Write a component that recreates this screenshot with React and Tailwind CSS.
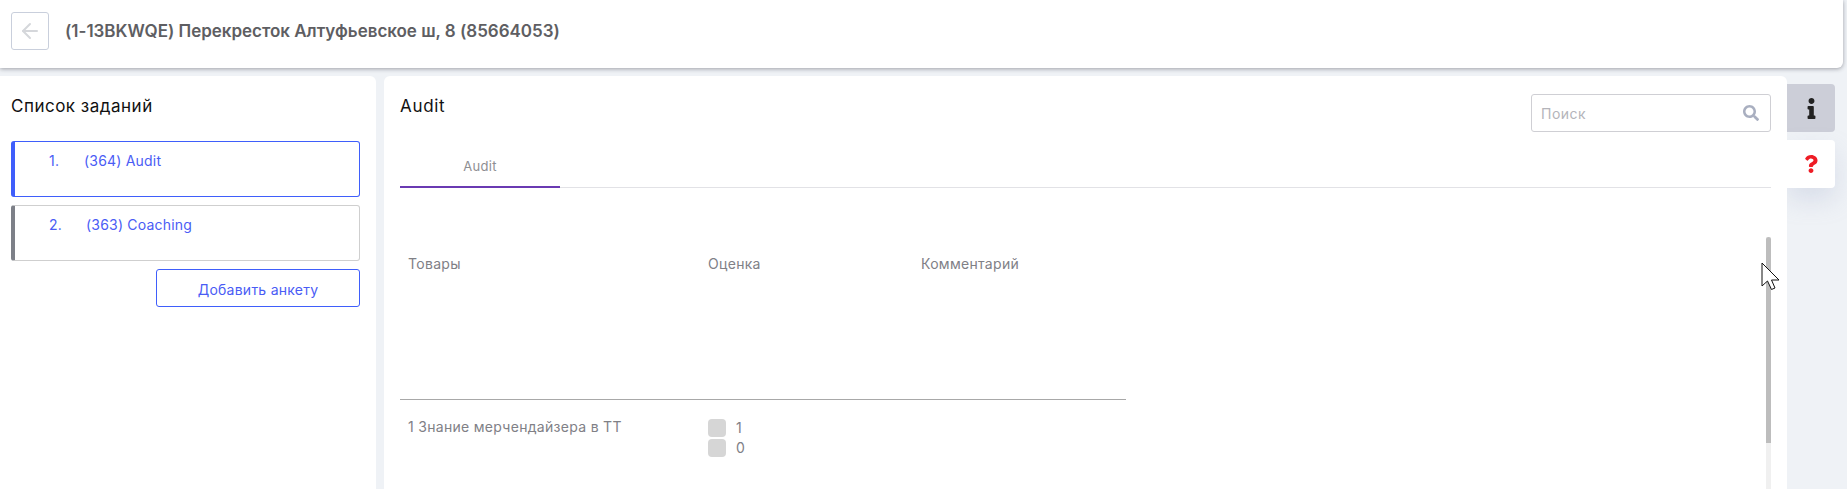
import React from 'react';
import { ArrowLeft } from 'lucide-react';
import { FaInfo, FaQuestion, FaSearch } from 'react-icons/fa';

const font = { fontFamily: 'Inter, "Noto Sans", sans-serif' };

function TaskCard({ num, label, active, labelGap }) {
  return (
    <div className={`h-[56px] rounded-[3px] border border-l-4 bg-white flex pt-[10px] pl-[34px] text-[14px] leading-[18px] tracking-[0.2px] text-[#4a5cf5] ${active ? 'border-[#3f5efb]' : 'border-[#cfcfcf] border-l-[#7d8088]'}`}>
      <span className={labelGap}>{num}</span>
      <span>{label}</span>
    </div>
  );
}

export default function App() {
  return (
    <div className="w-[1847px] h-[489px] overflow-hidden bg-[#eff2f6]" style={font}>
      <header className="w-[1843px] h-[68px] bg-white rounded-br-[6px] shadow-[0_1px_4px_rgba(60,60,70,0.45)] flex items-start pt-[12px] pl-[11px] relative z-10">
        <button className="w-[38px] h-[38px] rounded-[3px] border border-[#c9cfdc] flex items-center justify-center text-[#d5d7db]">
          <ArrowLeft className="w-[24px] h-[24px]" strokeWidth={2} />
        </button>
        <h1 className="ml-[16px] text-[17px] leading-[38px] font-semibold text-[#5e5e62] tracking-[-0.02px]">(1-13BKWQE) Перекресток Алтуфьевское ш, 8 (85664053)</h1>
      </header>

      <div className="flex pt-2 gap-2">
        <aside className="w-[376px] h-[413px] bg-white rounded-tr-[6px] pl-[11px] pr-[16px]">
          <h2 className="pt-[20px] text-[17px] leading-[20px] tracking-[0.5px] text-[#111]">Список заданий</h2>
          <div className="mt-[25px] flex flex-col gap-2">
            <TaskCard num="1." label="(364) Audit" active labelGap="w-[35px]" />
            <TaskCard num="2." label="(363) Coaching" labelGap="w-[37px]" />
          </div>
          <div className="flex justify-end mt-2">
            <button className="w-[204px] h-[38px] rounded-[3px] border border-[#3f5efb] bg-white pt-[3px] text-[14px] tracking-[0.25px] text-[#4a5cf5]">Добавить анкету</button>
          </div>
        </aside>

        <main className="relative w-[1403px] h-[413px] bg-white rounded-t-[6px] pl-[16px] pr-[16px] overflow-hidden">
          <div className="flex justify-between items-start pt-[18px]">
            <h2 className="mt-[2px] text-[17px] leading-[20px] tracking-[0.7px] text-[#111]">Audit</h2>
            <div className="w-[240px] h-[38px] rounded-[3px] border border-[#cfcfd4] flex items-center justify-between pl-[9px] pr-[11px]">
              <span className="text-[14px] tracking-[0.5px] text-[#b4b4ba]">Поиск</span>
              <FaSearch className="w-[16px] h-[16px] text-[#a9afc0]" />
            </div>
          </div>

          <div className="mt-[25px] h-[31px] border-b border-[#e2e2e6] flex">
            <div className="w-[160px] h-[31px] border-b-2 border-[#6a3ab2] text-center text-[13px] leading-[18px] tracking-[0.3px] text-[#8e8e92]">Audit</div>
          </div>

          <div className="w-[726px] mt-[67px]">
            <div className="h-[145px] border-b border-[#a8a8a8] grid grid-cols-[300px_213px_1fr] pl-[8px] text-[14px] leading-[18px] tracking-[0.3px] text-[#808086]">
              <span>Товары</span>
              <span>Оценка</span>
              <span>Комментарий</span>
            </div>
            <div className="grid grid-cols-[300px_1fr] pl-[8px] pt-[18px] text-[14px] leading-[20px] tracking-[0.3px] text-[#808086]">
              <span className="-mt-[1px]">1 Знание мерчендайзера в ТТ</span>
              <div className="flex flex-col gap-[1px]">
                <label className="flex items-center gap-[10px] h-[19px]">
                  <span className="w-[18px] h-[18px] rounded-[4px] bg-[#d6d6d6]" />
                  <span>1</span>
                </label>
                <label className="flex items-center gap-[10px] h-[19px]">
                  <span className="w-[18px] h-[18px] rounded-[4px] bg-[#d6d6d6]" />
                  <span>0</span>
                </label>
              </div>
            </div>
          </div>

          {/* scrollbar */}
          <div className="absolute left-[1382px] top-[161px] bottom-0 w-[5px] bg-[#f0f0f0]">
            <div className="w-[5px] h-[206px] rounded-t-[3px] bg-[#bdbdbd]" />
          </div>

          {/* mouse pointer */}
          <svg className="absolute left-[1377px] top-[186px]" width="20" height="29" viewBox="0 0 20 29">
            <path d="M1 1 L1 24 L6.5 19 L10.5 27.5 L14 26 L10.5 18 L18 18 Z" fill="#fff" stroke="#111" strokeWidth="1" />
          </svg>
        </main>

        <nav className="pt-2 flex flex-col gap-2 -ml-2">
          <div className="w-[48px] h-[48px] rounded-r-[4px] bg-[#ccced8] flex items-center justify-center text-[#222]">
            <FaInfo className="w-[21px] h-[21px]" />
          </div>
          <div className="w-[48px] h-[48px] rounded-r-[4px] bg-white shadow-[0_12px_24px_rgba(150,165,200,0.25)] flex items-center justify-center text-[#ee1c25]">
            <FaQuestion className="w-[18px] h-[18px]" />
          </div>
        </nav>
      </div>
    </div>
  );
}
